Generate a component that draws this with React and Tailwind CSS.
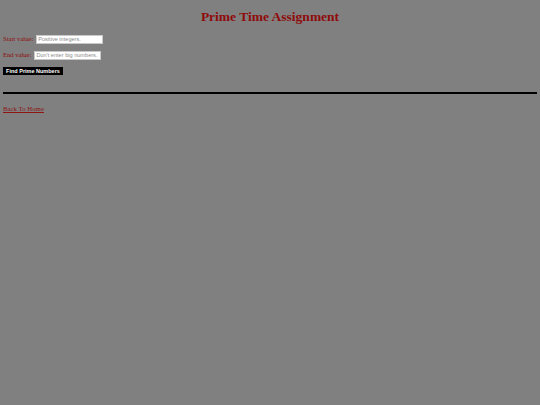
import React from 'react';

const serif = { fontFamily: '"Liberation Serif", "Times New Roman", serif' };
const sans = { fontFamily: '"Liberation Sans", Arial, sans-serif' };

const App = () => {
  return (
    <div className="min-h-[405px] w-full bg-[#808080] px-[3px] pt-[8px] text-[#8f0b0b]" style={serif}>
      <h1 className="text-center text-[13.5px] font-bold leading-[17px]">Prime Time Assignment</h1>

      <div className="mt-[9px] flex h-[10px] items-center gap-[3px] text-[6.6px]">
        <span>Start value:</span>
        <input
          type="text"
          placeholder="Positive integers."
          className="h-[9px] w-[67px] border border-[#c8c8c8] bg-white px-[1px] text-[5.6px] text-black outline-none placeholder:text-[#8a8a8a]"
          style={sans}
        />
      </div>

      <div className="mt-[6px] flex h-[10px] items-center gap-[3px] text-[6.6px]">
        <span>End value:</span>
        <input
          type="text"
          placeholder="Don't enter big numbers."
          className="h-[9px] w-[67px] border border-[#c8c8c8] bg-white px-[1px] text-[5.6px] text-black outline-none placeholder:text-[#8a8a8a]"
          style={sans}
        />
      </div>

      <button
        type="button"
        className="mt-[7px] flex h-[8px] w-[60px] items-center justify-center bg-black text-[5.5px] font-bold text-white"
        style={sans}
      >
        Find Prime Numbers
      </button>

      <hr className="mt-[17px] h-[2px] border-0 bg-black" />

      <a href="#" className="mt-[9px] inline-block text-[6.8px] leading-[8px] text-[#8f1515] underline">
        Back To Home
      </a>
    </div>
  );
};

export default App;
